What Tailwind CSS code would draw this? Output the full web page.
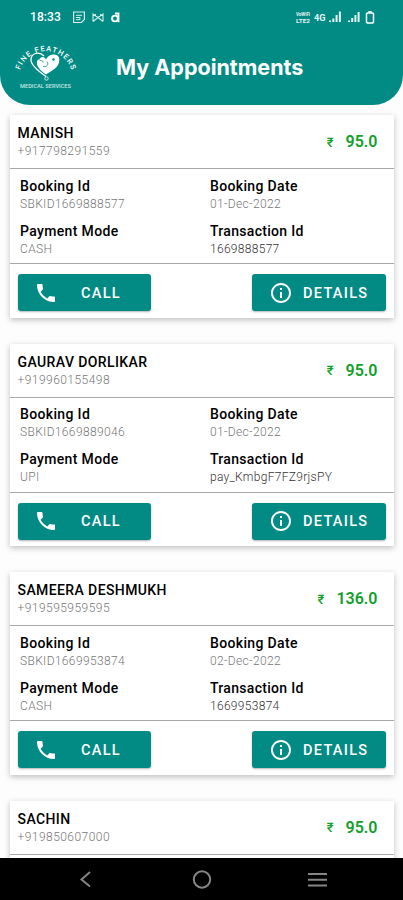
<!DOCTYPE html>
<html lang="en">

<head>
    <meta charset="UTF-8">
    <meta name="viewport" content="width=device-width, initial-scale=1.0">
    <title>My Appointments</title>
    <script src="https://cdn.jsdelivr.net/npm/@tailwindcss/browser@4"></script>
</head>

<body class="bg-[#fdfdfd] font-['Roboto',sans-serif] text-black">
    <!-- shared icons -->
    <svg class="hidden">
        <symbol id="icon-phone" viewBox="0 0 24 24">
            <path fill="currentColor" d="M6.62 10.79c1.44 2.83 3.76 5.14 6.59 6.59l2.2-2.2c.27-.27.67-.36 1.02-.24 1.12.37 2.33.57 3.57.57.55 0 1 .45 1 1V20c0 .55-.45 1-1 1C10.61 21 3 13.39 3 4c0-.55.45-1 1-1h3.5c.55 0 1 .45 1 1 0 1.25.2 2.45.57 3.57.11.35.03.74-.25 1.02l-2.2 2.2z"/>
        </symbol>
        <symbol id="icon-info" viewBox="0 0 24 24">
            <path fill="currentColor" d="M11 7h2v2h-2zm0 4h2v6h-2zm1-9C6.48 2 2 6.48 2 12s4.48 10 10 10 10-4.48 10-10S17.52 2 12 2zm0 18c-4.41 0-8-3.59-8-8s3.59-8 8-8 8 3.59 8 8-3.59 8-8 8z"/>
        </symbol>
    </svg>

    <div class="flex h-[900px] w-[403px] flex-col overflow-hidden">
        <header class="h-[105px] shrink-0 rounded-b-[30px] bg-[#028b85] text-white">
            <!-- status bar -->
            <div class="flex h-[34px] items-center pl-[30px] pr-[27px]">
                <span class="w-[43px] text-[12px] font-medium tracking-[0.1px]">18:33</span>
                <svg class="h-[13px] w-[48px]" viewBox="0 0 48 13" fill="none" stroke="#d5eeec">
                    <path d="M.6 1h10.800v7.500l-3 3H.6z" stroke-width="1.2"/>
                    <path d="M3 4.300h6M3 6.500h4M7 6.500v2.200H3" stroke-width="1"/>
                    <path d="M20 10.500V3l5 3.500L30 3v7.500M20 10.500l5-4 5 4M22.500 3v2M27.500 3v2" stroke-width="1.1"/>
                    <circle cx="42" cy="7.500" r="2.900" stroke="#fff" stroke-width="1.900"/>
                    <path d="M45.500 1.500v9.800M42 2.500h3.500" stroke="#fff" stroke-width="1.800"/>
                </svg>
                <div class="ml-auto flex items-center">
                    <svg class="h-[14px] w-[32px]" viewBox="0 0 32 14" fill="#e4f4f3">
                        <text x="0" y="6" font-size="5.500" font-weight="700" textLength="14" lengthAdjust="spacingAndGlyphs">VoWiFi</text>
                        <text x="0" y="12.700" font-size="5.500" font-weight="700" textLength="14" lengthAdjust="spacingAndGlyphs">LTE2</text>
                        <text x="18" y="11" font-size="9" font-weight="700" textLength="11.500" lengthAdjust="spacingAndGlyphs">4G</text>
                    </svg>
                    <svg class="h-[14px] w-[48px]" viewBox="0 0 48 14" fill="#e4f4f3">
                        <path d="M1 10.500h2V12H1zM4.300 8.500h2V12h-2zM7.600 5h2v7h-2zM10.900 1.500h2V12h-2z"/>
                        <path d="M20 10.500h2V12h-2zM23.200 8h2v4h-2zM26.400 5h2v7h-2zM29.600 2h2v10h-2z"/>
                        <rect x="38.500" y="3" width="7" height="10" rx="1" fill="none" stroke="#fff" stroke-width="1.500"/>
                        <path d="M40.250 1h3.500v2h-3.500z"/>
                    </svg>
                </div>
            </div>
            <div class="flex items-start">
                <svg class="ml-[12px] h-[56px] w-[66px]" viewBox="0 0 66 56" fill="none">
                    <defs>
                        <path id="arc" d="M8 36A27 27 0 0 1 59.500 36"/>
                    </defs>
                    <text fill="#fff" font-size="7.500" font-weight="500"><textPath href="#arc" startOffset="0" textLength="68" lengthAdjust="spacing">FINE FEATHERS</textPath></text>
                    <g transform="translate(0 2.500)">
                        <path d="M34 40C24 33 19 28 19 23.500c0-7 8-9 13-4" stroke="#fff" stroke-width="1.300"/>
                        <path d="M34 38C28 34 24 29 25 25c1-3 3-2 4-4 2-1 4 0 5 2 2-4 5-5 8-5 5 0 6 4 5 8-1 5-7 8-13 12z" fill="#fff"/>
                        <path d="M27 23c1 2 4 0 4 3M31 30c4 1 6-2 4-5" stroke="#028b85" stroke-width=".8"/>
                        <circle cx="41.500" cy="23" r="1.200" fill="#028b85"/>
                        <circle cx="34.500" cy="42" r="1.700" stroke="#d5eeec"/>
                    </g>
                    <text x="8" y="54" fill="#c5e6e4" font-size="5" font-weight="500" textLength="51" lengthAdjust="spacingAndGlyphs">MEDICAL SERVICES</text>
                </svg>
                <h1 class="ml-[38px] mt-[19px] font-['Inter',sans-serif] text-[21.5px] font-bold leading-[28px]">My Appointments</h1>
            </div>
        </header>

        <main id="appointments" class="flex min-h-0 flex-1 flex-col gap-[26px] overflow-hidden pl-[9.500px] pr-[9px] pt-[10px]"></main>

        <!-- system navigation -->
        <nav class="grid h-[42.500px] shrink-0 grid-cols-[92px_1fr_95px] items-center bg-black">
            <svg class="h-[20px] w-[14px] justify-self-end" viewBox="0 0 14 20" fill="none" stroke="#858585" stroke-width="2">
                <path d="M12 3L3.500 10.500l8.500 7"/>
            </svg>
            <svg class="ml-[3px] h-[20px] w-[20px] justify-self-center" viewBox="0 0 20 20" fill="none" stroke="#858585" stroke-width="2">
                <circle cx="10" cy="10.500" r="8.200"/>
            </svg>
            <svg class="h-[16px] w-[19px]" viewBox="0 0 19 16" stroke="#858585" stroke-width="2">
                <path d="M0 3h19M0 8.700h19M0 14.400h19"/>
            </svg>
        </nav>
    </div>

    <script>
        const appointments = [
            { name: 'MANISH', phone: '+917798291559', amount: '95.0', booking: 'SBKID1669888577', date: '01-Dec-2022', mode: 'CASH', transaction: '1669888577' },
            { name: 'GAURAV DORLIKAR', phone: '+919960155498', amount: '95.0', booking: 'SBKID1669889046', date: '01-Dec-2022', mode: 'UPI', transaction: 'pay_KmbgF7FZ9rjsPY' },
            { name: 'SAMEERA DESHMUKH', phone: '+919595959595', amount: '136.0', booking: 'SBKID1669953874', date: '02-Dec-2022', mode: 'CASH', transaction: '1669953874' },
            // only the top of this card fits above the navigation bar
            { name: 'SACHIN', phone: '+919850607000', amount: '95.0' },
        ];

        const body = (item) => `
            <div class="grid h-[95px] grid-cols-[190px_1fr] content-start gap-y-[9px] border-b border-[#aaa] pl-[10.500px] pt-[7.500px] text-[12px] font-light leading-[18px] tracking-[0.35px] text-[#777]">
                <div>
                    <h3 class="text-[14px] font-medium text-black">Booking Id</h3>
                    <p>${item.booking}</p>
                </div>
                <div>
                    <h3 class="text-[14px] font-medium text-black">Booking Date</h3>
                    <p>${item.date}</p>
                </div>
                <div>
                    <h3 class="text-[14px] font-medium text-black">Payment Mode</h3>
                    <p>${item.mode}</p>
                </div>
                <div>
                    <h3 class="text-[14px] font-medium tracking-[0.3px] text-black">Transaction Id</h3>
                    <p class="tracking-[0.3px] text-[#333]">${item.transaction}</p>
                </div>
            </div>
            <div class="flex justify-between pl-2 pr-[8.500px] pt-[10px] text-[14.500px] font-medium tracking-[1.300px] text-white">
                <button class="flex h-[37px] w-[133.500px] items-center rounded-[3px] bg-[#028b85] pl-[16.500px] shadow-[0_1px_2px_rgba(0,0,0,0.3)]">
                    <svg class="mr-[23px] size-6"><use href="#icon-phone"/></svg><span class="pt-[2px]">CALL</span>
                </button>
                <button class="flex h-[37px] w-[133.500px] items-center rounded-[3px] bg-[#028b85] pl-[17px] shadow-[0_1px_2px_rgba(0,0,0,0.3)]">
                    <svg class="mr-[10px] size-6"><use href="#icon-info"/></svg><span class="pt-[2px]">DETAILS</span>
                </button>
            </div>`;

        document.getElementById('appointments').innerHTML = appointments.map((item) => `
            <article class="h-[202.500px] shrink-0 bg-white shadow-[0_2px_6px_rgba(0,0,0,0.25)]">
                <div class="flex h-[54px] items-center justify-between border-b border-[#aaa] pl-2 pr-[16.500px] pt-[1.500px]">
                    <div>
                        <h2 class="text-[14px] font-medium leading-[18px] tracking-[0.4px]">${item.name}</h2>
                        <p class="text-[12px] font-light leading-[18px] tracking-[0.45px] text-[#777]">${item.phone}</p>
                    </div>
                    <p class="flex items-center gap-[12px] text-[16px] font-semibold text-[#12a02c]"><span class="text-[13px] font-medium">₹</span>${item.amount}</p>
                </div>
                ${item.booking ? body(item) : ''}
            </article>`).join('');
    </script>
</body>

</html>
